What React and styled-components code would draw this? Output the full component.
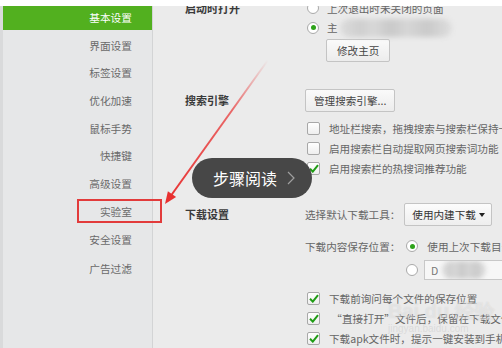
import React from "react";
import styled, { createGlobalStyle } from "styled-components";

const Global = createGlobalStyle`
  html, body { margin: 0; padding: 0; background: #fff; }
  body { font-family: "Noto Sans CJK SC", "Noto Sans", sans-serif; }
  * { box-sizing: border-box; }
`;

const Frame = styled.div`
  position: relative;
  width: 502px;
  height: 348px;
  overflow: hidden;
  background: #fff;
  padding-top: 6px;
`;

const Page = styled.div`
  display: flex;
  height: 342px;
  background: #ebebeb;
  overflow: hidden;
`;

const Sidebar = styled.nav`
  width: 153px;
  flex: none;
  background: #e6e7e8;
  border-left: 3px solid #d9dadb;
  border-right: 1px solid #d3d4d5;
  display: flex;
  flex-direction: column;
  gap: 3.7px;
`;

const NavItem = styled.div`
  height: 24px;
  line-height: 24px;
  text-align: right;
  padding-right: 20px;
  font-size: 10.7px;
  color: ${(p) => (p.$active ? "#fff" : "#6a6a6a")};
  background: ${(p) => (p.$active ? "#52b01f" : "transparent")};
  margin-top: ${(p) => p.$mt || 0}px;
`;

const Content = styled.main`
  flex: 1;
  padding-left: 32px;
  margin-top: -8px;
  display: flex;
  flex-direction: column;
  font-size: 10.6px;
  color: #666;
  min-width: 0;
`;

const Section = styled.section`
  display: flex;
  margin-top: ${(p) => p.$mt || 0}px;
`;

const Label = styled.div`
  width: 120px;
  flex: none;
  height: ${(p) => p.$h}px;
  line-height: ${(p) => p.$h}px;
  font-size: 11px;
  font-weight: 700;
  color: #3a3a3a;
  white-space: nowrap;
`;

const Controls = styled.div`
  display: flex;
  flex-direction: column;
  min-width: 0;
`;

const Row = styled.div`
  display: flex;
  align-items: center;
  height: ${(p) => p.$h || 20}px;
  margin-top: ${(p) => p.$mt || 0}px;
  padding-left: ${(p) => p.$pl ?? 2}px;
  gap: ${(p) => p.$gap ?? 8}px;
  white-space: nowrap;
`;

const Radio = styled.span`
  width: 12px;
  height: 12px;
  flex: none;
  border-radius: 50%;
  border: 1px solid #a9a9a9;
  background: #fff;
  position: relative;
  &::after {
    content: "";
    display: ${(p) => (p.$on ? "block" : "none")};
    position: absolute;
    left: 2.5px;
    top: 2.5px;
    width: 5px;
    height: 5px;
    border-radius: 50%;
    background: #2ea31a;
  }
`;

const Box = styled.span`
  width: 13px;
  height: 13px;
  flex: none;
  border: 1px solid #a8a8a8;
  border-radius: 2px;
  background: linear-gradient(#fff, #eee);
  display: flex;
  align-items: center;
  justify-content: center;
`;

const Button = styled.div`
  align-self: flex-start;
  height: 23px;
  line-height: 21px;
  margin-left: ${(p) => p.$ml || 0}px;
  margin-top: ${(p) => p.$mt || 0}px;
  padding: 0 ${(p) => p.$px || 10}px;
  border: 1px solid #c4c4c4;
  border-radius: 2px;
  background: linear-gradient(#fafafa, #ececec);
  color: #444;
  font-size: 10.6px;
  white-space: nowrap;
`;

const Select = styled.div`
  width: 88px;
  height: 23px;
  flex: none;
  border: 1px solid #c4c4c4;
  border-radius: 2px;
  background: linear-gradient(#fcfcfc, #eeeeee);
  color: #333;
  display: flex;
  align-items: center;
  justify-content: space-between;
  padding: 0 6px 0 7px;
`;

const Caret = styled.span`
  width: 0;
  height: 0;
  border-left: 3.5px solid transparent;
  border-right: 3.5px solid transparent;
  border-top: 4px solid #222;
`;

const Blur = styled.span`
  width: ${(p) => p.$w}px;
  height: 18px;
  flex: none;
  border-radius: 9px;
  background: linear-gradient(
    90deg,
    #dcdcdc 0%,
    #cfcfcf 18%,
    #d8d8d8 30%,
    #c9c9c9 45%,
    #d6d6d6 60%,
    #cacaca 78%,
    #dedede 100%
  );
  filter: blur(2.5px);
`;

const PathInput = styled.div`
  width: 90px;
  height: 20px;
  flex: none;
  border: 1px solid #c8c8c8;
  background: #f7f7f7;
  display: flex;
  align-items: center;
  gap: 4px;
  padding-left: 6px;
  color: #777;
  overflow: hidden;
`;

const Pill = styled.div`
  position: absolute;
  left: 192px;
  top: 158px;
  width: 120px;
  height: 40px;
  border-radius: 20px;
  background: #474747;
  display: flex;
  align-items: center;
  padding-left: 21px;
  gap: 10px;
  color: #fff;
  font-size: 16px;
`;

const Watermark = styled.div`
  position: absolute;
  left: 388px;
  top: 300px;
  color: rgba(255, 255, 255, 0.4);
  text-shadow: 0 0 1px rgba(130, 130, 130, 0.25);
  font-family: "Liberation Sans", Arial, sans-serif;
  font-weight: 700;
  font-size: 20px;
  line-height: 22px;
  pointer-events: none;
  & small {
    display: block;
    font-size: 10px;
    font-weight: 400;
    line-height: 14px;
    color: rgba(170, 170, 170, 0.25);
    text-shadow: none;
  }
`;

const Overlay = styled.svg`
  position: absolute;
  left: 0;
  top: 0;
  pointer-events: none;
`;

const Check = () => (
  <svg width="10" height="9" viewBox="0 0 10 9">
    <path d="M1 4.8 L3.8 7.6 L9 1.2" fill="none" stroke="#1f9c14" strokeWidth="2" />
  </svg>
);

const nav = ["基本设置", "界面设置", "标签设置", "优化加速", "鼠标手势", "快捷键", "高级设置", "实验室", "安全设置", "广告过滤"];

export default function App() {
  return (
    <>
      <Global />
      <Frame>
        <Page>
          <Sidebar>
            {nav.map((n, i) => (
              <NavItem key={n} $active={i === 0} $mt={i === 9 ? 2 : 0}>
                {n}
              </NavItem>
            ))}
          </Sidebar>
          <Content>
            <Section>
              <Label $h={20}>启动时打开</Label>
              <Controls>
                <Row>
                  <Radio />
                  <span>上次退出时未关闭的页面</span>
                </Row>
                <Row $h={19}>
                  <Radio $on />
                  <span>主</span>
                  <Blur $w={112} style={{ marginLeft: -6 }} />
                </Row>
                <Button $ml={21} $mt={2}>修改主页</Button>
              </Controls>
            </Section>

            <Section $mt={27}>
              <Label $h={23}>搜索引擎</Label>
              <Controls>
                <Button $ml={0} $px={8}>管理搜索引擎...</Button>
                <Row $mt={6} $gap={9}>
                  <Box />
                  <span>地址栏搜索，拖拽搜索与搜索栏保持一致</span>
                </Row>
                <Row $gap={9}>
                  <Box />
                  <span>启用搜索栏自动提取网页搜索词功能</span>
                </Row>
                <Row $gap={9}>
                  <Box>
                    <Check />
                  </Box>
                  <span>启用搜索栏的热搜词推荐功能</span>
                </Row>
              </Controls>
            </Section>

            <Section $mt={25}>
              <Label $h={23}>下载设置</Label>
              <Controls>
                <Row $h={23} $pl={0} $gap={4}>
                  <span>选择默认下载工具：</span>
                  <Select>
                    <span>使用内建下载</span>
                    <Caret />
                  </Select>
                </Row>
                <Row $mt={10} $pl={0} $gap={6}>
                  <span>下载内容保存位置：</span>
                  <Radio $on />
                  <span style={{ marginLeft: 3 }}>使用上次下载目录</span>
                </Row>
                <Row $mt={4} $pl={101} $gap={6}>
                  <Radio />
                  <PathInput>
                    <span>D</span>
                    <Blur $w={44} />
                  </PathInput>
                </Row>
                <Row $mt={8} $gap={9}>
                  <Box>
                    <Check />
                  </Box>
                  <span>下载前询问每个文件的保存位置</span>
                </Row>
                <Row $gap={9}>
                  <Box>
                    <Check />
                  </Box>
                  <span>&nbsp;“直接打开”文件后，保留在下载文件夹</span>
                </Row>
                <Row $gap={9}>
                  <Box>
                    <Check />
                  </Box>
                  <span>下载apk文件时，提示一键安装到手机</span>
                </Row>
              </Controls>
            </Section>
          </Content>
        </Page>

        <Watermark>
          Bai du 经验
          <small>jingyan.baidu.com</small>
        </Watermark>

        <Overlay width="502" height="348" viewBox="0 0 502 348">
          <defs>
            <linearGradient id="fade" gradientUnits="userSpaceOnUse" x1="268" y1="60" x2="166" y2="203">
              <stop offset="0" stopColor="#e83030" stopOpacity="0" />
              <stop offset="0.35" stopColor="#e83030" stopOpacity="0.7" />
              <stop offset="1" stopColor="#e83030" stopOpacity="1" />
            </linearGradient>
          </defs>
          <line x1="268" y1="60" x2="170" y2="197" stroke="url(#fade)" strokeWidth="2" />
          <polygon points="165,204 176.1,197.1 167.9,191.3" fill="#e83030" />
          <rect x="78" y="200" width="83" height="22" fill="none" stroke="#e23b3b" strokeWidth="2" />
        </Overlay>

        <Pill>
          <span>步骤阅读</span>
          <svg width="8" height="14" viewBox="0 0 8 14">
            <path d="M1 1 L7 7 L1 13" fill="none" stroke="#a0a0a0" strokeWidth="1.2" />
          </svg>
        </Pill>
      </Frame>
    </>
  );
}
